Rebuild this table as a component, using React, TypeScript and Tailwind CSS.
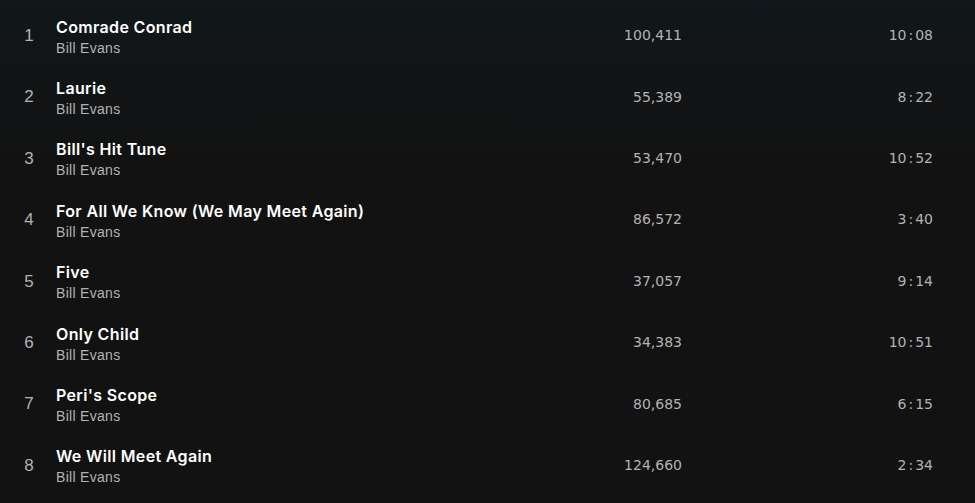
import React from "react";

const tracks = [
  { n: 1, title: "Comrade Conrad", plays: "100,411", dur: "10:08" },
  { n: 2, title: "Laurie", plays: "55,389", dur: "8:22" },
  { n: 3, title: "Bill's Hit Tune", plays: "53,470", dur: "10:52" },
  { n: 4, title: "For All We Know (We May Meet Again)", plays: "86,572", dur: "3:40" },
  { n: 5, title: "Five", plays: "37,057", dur: "9:14" },
  { n: 6, title: "Only Child", plays: "34,383", dur: "10:51" },
  { n: 7, title: "Peri's Scope", plays: "80,685", dur: "6:15" },
  { n: 8, title: "We Will Meet Again", plays: "124,660", dur: "2:34" },
];

export default function App() {
  return (
    <div className="w-[975px] h-[503px] overflow-hidden bg-[linear-gradient(180deg,#11171a_0px,#121212_160px,#121212_100%)] pt-[4px]">
      {tracks.map((t) => {
        const [m, s] = t.dur.split(":");
        return (
          <div key={t.n} className="flex items-center h-[61.4px]">
            <div className="w-[56px] pl-[2px] pt-[2px] text-center text-[17px] text-[#b3b3b3] font-['Liberation_Sans',sans-serif]">
              {t.n}
            </div>
            <div className="flex-1 flex flex-col mt-[5px]">
              <div className="text-[16px] leading-[21px] text-white font-semibold font-['Inter',sans-serif] tracking-[0.35px]">
                {t.title}
              </div>
              <div className="text-[14px] leading-[20px] text-[#b3b3b3] font-['Liberation_Sans',sans-serif] tracking-[0.3px]">
                Bill Evans
              </div>
            </div>
            <div className="w-[200px] mr-[41px] pt-[2px] text-right text-[14px] text-[#b3b3b3] font-['DejaVu_Sans',sans-serif] tabular-nums">
              {t.plays}
            </div>
            <div className="w-[252px] text-right pr-[42px] pt-[2px] text-[14px] text-[#b3b3b3] font-['DejaVu_Sans',sans-serif] tabular-nums">
              {m}
              <span className="px-[2px]">:</span>
              {s}
            </div>
          </div>
        );
      })}
    </div>
  );
}
